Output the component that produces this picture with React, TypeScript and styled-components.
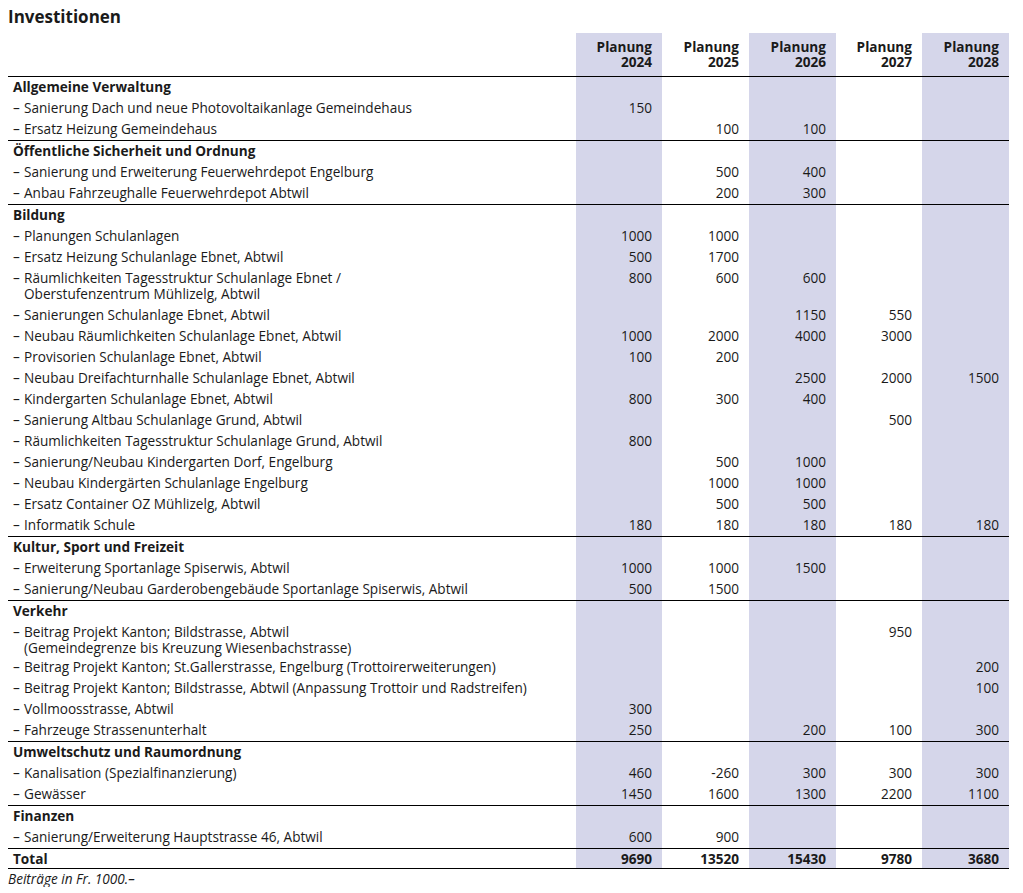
import React from "react";
import styled, { createGlobalStyle } from "styled-components";

const GlobalStyle = createGlobalStyle`
  html, body { margin: 0; padding: 0; background: #ffffff; }
  body {
    font-family: "Open Sans", "Noto Sans", "Liberation Sans", sans-serif;
    color: #1a1a1a;
  }
`;

const SHADE = "#d5d6ea";
const GRID = "568px 86px 87px 87px 86px 87px";
const FS = "13.6px";

const Page = styled.div`
  padding: 5px 8px 0 8px;
  width: 1001px;
`;

const Title = styled.h1`
  margin: 0 0 4px 0;
  font-size: 17px;
  line-height: 24px;
  font-weight: 700;
`;

const HeaderRow = styled.div`
  display: grid;
  grid-template-columns: ${GRID};
  border-bottom: 1px solid #000;
`;

const HeadCell = styled.div<{ $shaded?: boolean }>`
  background: ${(p) => (p.$shaded ? SHADE : "transparent")};
  padding: 6px 10px 7px 0;
  font-size: ${FS};
  line-height: 15px;
  font-weight: 700;
  text-align: right;
`;

const Section = styled.div<{ $top?: boolean }>`
  border-top: ${(p) => (p.$top ? "1px solid #000" : "none")};
`;

const Row = styled.div<{ $last?: boolean }>`
  display: grid;
  grid-template-columns: ${GRID};
  border-bottom: ${(p) => (p.$last ? "1px solid #000" : "none")};
`;

const LabelCell = styled.div<{ $bold?: boolean; $tight?: boolean }>`
  padding: 2px 0 ${(p) => (p.$tight ? "1px" : "3px")} 5px;
  font-size: ${FS};
  line-height: 16px;
  font-weight: ${(p) => (p.$bold ? 700 : 400)};
  display: flex;
`;

const Dash = styled.span`
  flex: 0 0 11px;
`;

const LabelText = styled.span`
  display: flex;
  flex-direction: column;
`;

const NumCell = styled.div<{ $shaded?: boolean; $bold?: boolean }>`
  background: ${(p) => (p.$shaded ? SHADE : "transparent")};
  padding: 2px 10px 1px 0;
  font-size: ${FS};
  line-height: 16px;
  text-align: right;
  font-weight: ${(p) => (p.$bold ? 700 : 400)};
`;

const Note = styled.div`
  margin-top: 2px;
  font-size: ${FS};
  line-height: 16px;
  font-style: italic;
`;

type Item = { label: string[]; v: (number | null)[]; tight?: boolean };
type Group = { title: string; items: Item[] };

const n = null;

const groups: Group[] = [
  {
    title: "Allgemeine Verwaltung",
    items: [
      { label: ["Sanierung Dach und neue Photovoltaikanlage Gemeindehaus"], v: [150, n, n, n, n] },
      { label: ["Ersatz Heizung Gemeindehaus"], v: [n, 100, 100, n, n] },
    ],
  },
  {
    title: "Öffentliche Sicherheit und Ordnung",
    items: [
      { label: ["Sanierung und Erweiterung Feuerwehrdepot Engelburg"], v: [n, 500, 400, n, n] },
      { label: ["Anbau Fahrzeughalle Feuerwehrdepot Abtwil"], v: [n, 200, 300, n, n] },
    ],
  },
  {
    title: "Bildung",
    items: [
      { label: ["Planungen Schulanlagen"], v: [1000, 1000, n, n, n] },
      { label: ["Ersatz Heizung Schulanlage Ebnet, Abtwil"], v: [500, 1700, n, n, n] },
      {
        label: ["Räumlichkeiten Tagesstruktur Schulanlage Ebnet /", "Oberstufenzentrum Mühlizelg, Abtwil"],
        v: [800, 600, 600, n, n],
      },
      { label: ["Sanierungen Schulanlage Ebnet, Abtwil"], v: [n, n, 1150, 550, n] },
      { label: ["Neubau Räumlichkeiten Schulanlage Ebnet, Abtwil"], v: [1000, 2000, 4000, 3000, n] },
      { label: ["Provisorien Schulanlage Ebnet, Abtwil"], v: [100, 200, n, n, n] },
      { label: ["Neubau Dreifachturnhalle Schulanlage Ebnet, Abtwil"], v: [n, n, 2500, 2000, 1500] },
      { label: ["Kindergarten Schulanlage Ebnet, Abtwil"], v: [800, 300, 400, n, n] },
      { label: ["Sanierung Altbau Schulanlage Grund, Abtwil"], v: [n, n, n, 500, n] },
      { label: ["Räumlichkeiten Tagesstruktur Schulanlage Grund, Abtwil"], v: [800, n, n, n, n] },
      { label: ["Sanierung/Neubau Kindergarten Dorf, Engelburg"], v: [n, 500, 1000, n, n] },
      { label: ["Neubau Kindergärten Schulanlage Engelburg"], v: [n, 1000, 1000, n, n] },
      { label: ["Ersatz Container OZ Mühlizelg, Abtwil"], v: [n, 500, 500, n, n] },
      { label: ["Informatik Schule"], v: [180, 180, 180, 180, 180] },
    ],
  },
  {
    title: "Kultur, Sport und Freizeit",
    items: [
      { label: ["Erweiterung Sportanlage Spiserwis, Abtwil"], v: [1000, 1000, 1500, n, n] },
      { label: ["Sanierung/Neubau Garderobengebäude Sportanlage Spiserwis, Abtwil"], v: [500, 1500, n, n, n] },
    ],
  },
  {
    title: "Verkehr",
    items: [
      {
        label: ["Beitrag Projekt Kanton; Bildstrasse, Abtwil", "(Gemeindegrenze bis Kreuzung Wiesenbachstrasse)"],
        v: [n, n, n, 950, n],
        tight: true,
      },
      { label: ["Beitrag Projekt Kanton; St.Gallerstrasse, Engelburg (Trottoirerweiterungen)"], v: [n, n, n, n, 200] },
      { label: ["Beitrag Projekt Kanton; Bildstrasse, Abtwil (Anpassung Trottoir und Radstreifen)"], v: [n, n, n, n, 100] },
      { label: ["Vollmoosstrasse, Abtwil"], v: [300, n, n, n, n] },
      { label: ["Fahrzeuge Strassenunterhalt"], v: [250, n, 200, 100, 300] },
    ],
  },
  {
    title: "Umweltschutz und Raumordnung",
    items: [
      { label: ["Kanalisation (Spezialfinanzierung)"], v: [460, -260, 300, 300, 300] },
      { label: ["Gewässer"], v: [1450, 1600, 1300, 2200, 1100] },
    ],
  },
  {
    title: "Finanzen",
    items: [{ label: ["Sanierung/Erweiterung Hauptstrasse 46, Abtwil"], v: [600, 900, n, n, n] }],
  },
];

const years = [2024, 2025, 2026, 2027, 2028];
const totals = [9690, 13520, 15430, 9780, 3680];
const isShaded = (i: number) => i % 2 === 0;

const Numbers: React.FC<{ values: (number | null)[]; bold?: boolean }> = ({ values, bold }) => (
  <>
    {values.map((v, i) => (
      <NumCell key={i} $shaded={isShaded(i)} $bold={bold}>
        {v === null ? "" : String(v)}
      </NumCell>
    ))}
  </>
);

export default function App() {
  return (
    <>
      <GlobalStyle />
      <Page>
        <Title>Investitionen</Title>
        <HeaderRow>
          <HeadCell />
          {years.map((y, i) => (
            <HeadCell key={y} $shaded={isShaded(i)}>
              Planung
              <br />
              {y}
            </HeadCell>
          ))}
        </HeaderRow>
        {groups.map((g, gi) => (
          <Section key={g.title} $top={gi > 0}>
            <Row>
              <LabelCell $bold>{g.title}</LabelCell>
              <Numbers values={[n, n, n, n, n]} />
            </Row>
            {g.items.map((it, ii) => (
              <Row key={ii}>
                <LabelCell $tight={it.tight}>
                  <Dash>–</Dash>
                  <LabelText>
                    {it.label.map((l, li) => (
                      <span key={li}>{l}</span>
                    ))}
                  </LabelText>
                </LabelCell>
                <Numbers values={it.v} />
              </Row>
            ))}
          </Section>
        ))}
        <Section $top>
          <Row $last>
            <LabelCell $bold $tight>
              Total
            </LabelCell>
            <Numbers values={totals} bold />
          </Row>
        </Section>
        <Note>Beiträge in Fr. 1000.–</Note>
      </Page>
    </>
  );
}
